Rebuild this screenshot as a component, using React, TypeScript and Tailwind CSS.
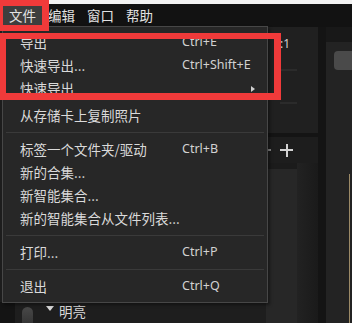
// File menu of a dark photo app, opened over the library panels.
// Two red boxes are annotations drawn on top of the screenshot.

const CJK = "font-['Noto_Sans_CJK_SC','Noto_Sans',sans-serif]";
const LATIN = "font-['Noto_Sans','Noto_Sans_CJK_SC',sans-serif]";

type Item =
  | { kind: "item"; label: string; shortcut?: string; submenu?: boolean }
  | { kind: "sep" }
  | { kind: "gap" };

const MENU: Item[] = [
  { kind: "item", label: "导出", shortcut: "Ctrl+E" },
  { kind: "item", label: "快速导出...", shortcut: "Ctrl+Shift+E" },
  { kind: "item", label: "快速导出", submenu: true },
  { kind: "gap" },
  { kind: "item", label: "从存储卡上复制照片" },
  { kind: "sep" },
  { kind: "item", label: "标签一个文件夹/驱动", shortcut: "Ctrl+B" },
  { kind: "item", label: "新的合集..." },
  { kind: "item", label: "新智能集合..." },
  { kind: "item", label: "新的智能集合从文件列表..." },
  { kind: "sep" },
  { kind: "item", label: "打印...", shortcut: "Ctrl+P" },
  { kind: "sep" },
  { kind: "item", label: "退出", shortcut: "Ctrl+Q" },
];

const TOP_MENUS = ["文件", "编辑", "窗口", "帮助"];

function MenuRow({ item }: { item: Item }) {
  if (item.kind === "gap") return <div className="h-[4px]" />;
  if (item.kind === "sep")
    return (
      <div className="h-[11px] pt-[5px] px-[3px]">
        <div className="h-px bg-[#3a3a3a]" />
      </div>
    );
  return (
    <div className="h-[23px] flex items-center pl-[17px] pr-[12px]">
      <span className={`w-[162px] shrink-0 text-[13.5px] text-[#dadada] ${CJK}`}>
        {item.label}
      </span>
      {item.shortcut && (
        <span className={`text-[12.5px] text-[#d2d2d2] ${LATIN}`}>{item.shortcut}</span>
      )}
      {item.submenu && (
        <span className="ml-auto w-0 h-0 border-y-[3px] border-y-transparent border-l-[4px] border-l-[#cfcfcf]" />
      )}
    </div>
  );
}

export default function App() {
  return (
    <div className="relative w-[352px] h-[323px] overflow-hidden bg-[#1b1b1b] flex flex-col">
      {/* window edge above the menubar */}
      <div className="h-[4px] bg-[#f2f2f2]" />

      {/* Menubar */}
      <div className="h-[23px] bg-[#121212] flex items-center pl-[3px]">
        {TOP_MENUS.map((m, i) => (
          <span
            key={m}
            className={`h-full flex items-center px-[6px] text-[13.5px] text-[#e2e2e2] ${CJK} ${
              i === 0 ? "bg-[#3e3e3e]" : ""
            }`}
          >
            {m}
          </span>
        ))}
      </div>

      {/* Panels behind the menu */}
      <div className="flex flex-1 min-h-0">
        {/* Left panel — mostly hidden by the dropdown */}
        <div className="w-[266px] shrink-0 flex flex-col bg-[#1e1e1e]">
          <div className="flex-1" />
          <div className="h-[21px] flex items-start">
            <div className="w-[15px] h-full bg-[#141414]" />
            <div className="ml-[7px] mt-[5px] w-[11px] h-full rounded-t-full bg-gradient-to-b from-[#484848] to-[#303030]" />
            <span className="ml-[13px] mt-[4px] w-0 h-0 border-x-[4px] border-x-transparent border-t-[5px] border-t-[#d8d8d8]" />
            <span className={`ml-[5px] text-[13.5px] leading-[18px] text-[#dadada] ${CJK}`}>明亮</span>
          </div>
        </div>

        {/* Middle column */}
        <div className="w-[60px] shrink-0 flex">
          <div className="w-[52px] flex flex-col">
            <div className="h-[106px] bg-[#202020] pl-[14px] pt-[10px] flex flex-col">
              <span className={`text-[12px] leading-[14px] text-[#cfcfcf] ${LATIN}`}>:1</span>
              <div className="mt-[18px] w-[17px] h-[2px] bg-[#2b2b2b]" />
              <div className="mt-[31px] w-[17px] h-[2px] bg-[#2b2b2b]" />
            </div>
            <div className="h-[4px] bg-[#141414]" />
            <div className="h-[26px] flex items-center gap-[9px] bg-[#1d1d1d]">
              <span className="w-[5px] h-[2px] bg-[#8a8a8a]" />
              <span className="relative w-[13px] h-[13px]">
                <span className="absolute left-0 top-[5.5px] w-[13px] h-[2px] bg-[#d2d2d2]" />
                <span className="absolute top-0 left-[5.5px] w-[2px] h-[13px] bg-[#d2d2d2]" />
              </span>
            </div>
            <div className="flex-1 flex">
              <div className="w-[31px] mt-[6px] bg-[#272727]" />
              <div className="flex-1 bg-gradient-to-r from-[#222] to-[#1a1a1a]" />
            </div>
          </div>
          <div className="w-[8px] bg-[#141414]" />
        </div>

        {/* Right column */}
        <div className="flex-1 min-w-0 overflow-hidden flex flex-col">
          <div className="h-[15px] bg-[#181818]" />
          <div className="flex-1 bg-[#232323] pt-[9px] pl-[8px] relative">
            <div className="w-[30px] h-[19px] rounded-[4px] bg-[#4a4a4a]" />
            <div className="absolute right-[2px] top-[132px] bottom-0 w-px bg-[#9c8a66]" />
          </div>
        </div>
      </div>

      {/* File dropdown */}
      <div className="absolute left-[2px] top-[26px] w-[266px] h-[277px] bg-[#272727] border border-[#474747] pt-[4px] shadow-[2px_2px_3px_rgba(0,0,0,0.4)]">
        {MENU.map((item, i) => (
          <MenuRow key={i} item={item} />
        ))}
      </div>

      {/* Red annotation boxes */}
      <div className="absolute left-0 top-0 w-[49px] h-[31px] border-t-[6px] border-l-[3px] border-r-[7px] border-b-[6px] border-[#f03a3a]" />
      <div className="absolute left-0 top-[33px] w-[281px] h-[67px] border-[6px] border-r-[7px] border-b-[7px] border-[#f03a3a]" />
    </div>
  );
}
